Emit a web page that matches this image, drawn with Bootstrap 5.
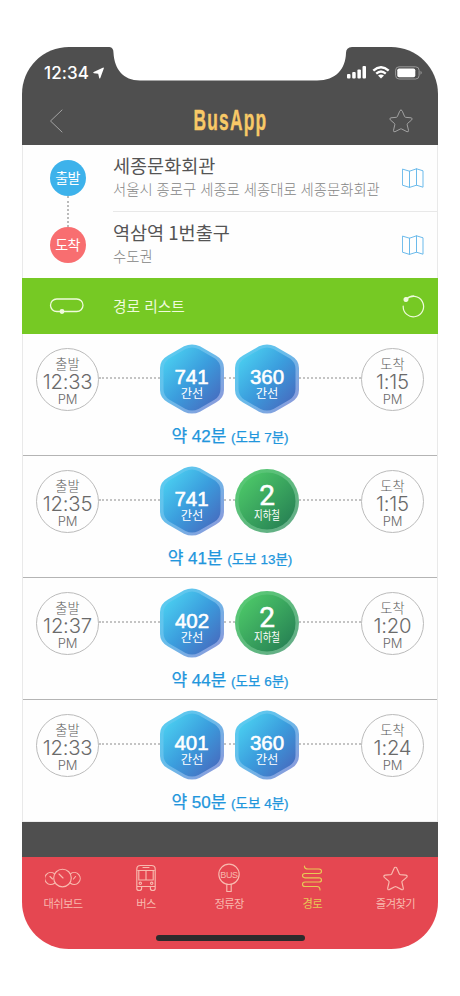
<!DOCTYPE html>
<html lang="ko">
<head>
<meta charset="utf-8">
<meta name="viewport" content="width=device-width, initial-scale=1">
<title>BusApp</title>
<link rel="stylesheet" href="https://cdn.jsdelivr.net/npm/bootstrap@5.3.0/dist/css/bootstrap.min.css">
<style>
body{background:#fff;font-family:"Liberation Sans","Noto Sans CJK KR",sans-serif;color:#595959}
svg{display:block;flex:none}
.phone{width:416px;height:902px;margin:47px 0 0 22px;border-radius:47px;overflow:hidden;background:#fefefe}
.line-icon{fill:none;stroke:currentColor;stroke-linecap:round;stroke-linejoin:round}
.app-head{height:98px;background:#4f4f4f}
.notch{left:0;top:0}
.status{height:51px;padding:0 15px 0 22px}
.clock{font:500 17px/20px Inter,sans-serif;letter-spacing:.1px}
.signals{gap:5px}
.titlebar{height:47px;padding:0 25px 2px 27px;color:#a3a3a3}
.brand{fill:#f8c967;stroke:#f8c967;stroke-width:.4px;stroke-linejoin:round;font:700 28px "Liberation Sans",sans-serif;letter-spacing:2px}
.sides{border:solid #e9e9e9;border-width:0 1px}
.places{height:133px}
.stops{width:89px;padding-top:15px}
.dot{width:36px;height:36px;font:14px/34px "Noto Sans CJK KR",sans-serif;letter-spacing:-.6px;text-align:center}
.dot.from{background:#3db2eb}.dot.to{background:#f86e70}
.stem{height:31px;border-left:2px dotted #bbb}
.place{height:66px;padding-right:13px;margin-left:1px}
.place+.place{border-top:1px solid #e8e8e8;height:67px}
.name{font:18.6px/26px "Noto Sans CJK KR",sans-serif;color:#555;padding-top:7px;word-spacing:-1px;letter-spacing:-.05px}
.addr{font:14.35px/20px "Noto Sans CJK KR",sans-serif;color:#858585;font-weight:300;white-space:nowrap;padding-top:1px}
.map{color:#6bbaeb}
.bar{height:56px;background:#76c924;padding:0 13px 0 27px;color:#effbdc;font:14.7px/54px "Noto Sans CJK KR",sans-serif}
.bar .label{padding-left:29px;padding-bottom:1px}
.route{height:122px;padding:10px 13px 0;border-bottom:1px solid #b4b4b4}
.route:last-of-type{border-bottom-color:#eee}
.when{width:63px;height:63px;border:1px solid #bbb;border-radius:50%;color:#777;text-align:center;padding-top:6px}
.when div{font:300 13.2px/17px "Noto Sans CJK KR",sans-serif;color:#5a5a5a}
.when b{display:block;font:300 20.3px/20px Inter,sans-serif;letter-spacing:-.2px;color:#6a6a6a}
.when small{display:block;font:300 13px/14px Inter,sans-serif;letter-spacing:-.1px;color:#6a6a6a}
.dash{border-top:2px dotted #c4c4c4;height:0;margin-bottom:2px}
.dash.lead-in{width:61px}
.dash.gap{width:11px}
.num{font:20.5px "Liberation Sans",sans-serif;fill:#fff;stroke:#fff;stroke-width:.55px;text-anchor:middle}
.num.big{font:28px Roboto,sans-serif;stroke-width:.5px}
.kind{font:12.3px "Noto Sans CJK KR",sans-serif;fill:#fff;text-anchor:middle}
.total{font:400 17px/24px "Liberation Sans","Noto Sans CJK KR",sans-serif;color:#2196dc;-webkit-text-stroke:.25px #2196dc;padding-top:11px;text-align:center}
.total span{font-size:13.5px}
.spacer{height:35px;background:#4f4f4f}
.tabs{height:92px;background:#e54751;color:#f8b9ae;padding-top:5px}
.tabrow{margin-left:-1px}
.tabrow svg{stroke-width:1.15px}
.tab{width:84px;margin-right:-.9px;font:11.3px/16px "Noto Sans CJK KR",sans-serif;letter-spacing:-.6px}
.tab.on{color:#e7c955}
.home{width:149px;height:6px;border-radius:3px;background:#2d2b2c}
</style>
</head>
<body>
<svg width="0" height="0" class="position-absolute">
<defs>
<linearGradient id="gb" x1="0" y1="0" x2="1" y2="1"><stop offset=".12" stop-color="#49cbef"/><stop offset=".5" stop-color="#3b9ddd"/><stop offset=".95" stop-color="#4768bd"/></linearGradient>
<linearGradient id="ge" x1="0" y1="0" x2="1" y2="1"><stop offset=".1" stop-color="#5accf0"/><stop offset=".5" stop-color="#6bb9e9"/><stop offset=".95" stop-color="#8f97da"/></linearGradient>
<linearGradient id="gg" x1="0" y1="0" x2="1" y2="1"><stop offset=".1" stop-color="#4cc768"/><stop offset=".9" stop-color="#278254"/></linearGradient>
<linearGradient id="gh" x1="0" y1="0" x2="1" y2="1"><stop offset=".1" stop-color="#57c973"/><stop offset=".9" stop-color="#65ad88"/></linearGradient>
<symbol id="hex" viewBox="0 0 64 70"><path fill="url(#ge)" d="M24 2.3Q32-1.500 40 2.3L56 11.5Q64 16 64 24V46Q64 54 56 58.5L40 67.7Q32 71.500 24 67.7L8 58.5Q0 54 0 46V24Q0 16 8 11.5Z"/><path fill="url(#gb)" d="M25.500 5Q32 1.800 38.500 5L54.500 14.200Q60.500 18 60.500 25V45Q60.500 52 54.500 55.800L38.500 65Q32 68.200 25.500 65L9.500 55.800Q3.500 52 3.500 45V25Q3.500 18 9.500 14.200Z"/></symbol>
<symbol id="disc" viewBox="0 0 64 70"><circle cx="32" cy="35" r="32" fill="url(#gh)"/><circle cx="32" cy="35" r="28.500" fill="url(#gg)"/></symbol>
<symbol id="map" viewBox="0 0 22 20"><path d="M.8 1.200 7.500 3.200 14.500.8 21 2.800V19.200L14.500 17.200 7.500 19.400.8 17.300ZM7.500 3.200V19.400M14.500.8V17.200"/></symbol>
<symbol id="star" viewBox="0 0 24 24"><path d="M12 1.200Q13 1.200 13.300 2.200L15.600 7.500Q15.800 8.200 16.600 8.300L22 8.800Q24 9.300 22.700 10.900L18.500 14.500Q18 15 18.200 15.800L19.500 21.300Q19.700 23.200 18 22.700L12.700 20Q12 19.600 11.300 20L6 22.700Q4.300 23.200 4.500 21.300L5.800 15.800Q6 15 5.500 14.500L1.300 10.900Q0 9.300 2 8.800L7.400 8.300Q8.200 8.200 8.400 7.500L10.700 2.200Q11 1.200 12 1.200Z"/></symbol>
</defs>
</svg>

<main class="phone position-relative">
<header class="app-head position-relative">
<svg class="notch position-absolute" width="416" height="36"><path fill="#fff" d="M85 0H87.500Q91.500 .5 91.500 6C92.500 22 101 33.500 118 33.500H295C314 33.500 323.500 22 324 6Q324 .5 330 0Z"/></svg>
<div class="status d-flex align-items-center justify-content-between text-white position-relative">
<div class="d-flex align-items-center"><span class="clock">12:34</span><svg class="ms-1" width="11" height="12" viewBox="0 0 11 12" fill="#fff"><path d="M10.300.6Q11.100.5 10.800 1.400L7.300 11Q6.700 12.100 6.200 11L5.200 6.700.9 6.200Q-.4 5.700.7 5Z"/></svg></div>
<div class="signals d-flex align-items-center">
<svg width="20" height="13" viewBox="0 0 20 13" fill="#fff"><rect x="0" y="8" width="3.500" height="4.500" rx="1"/><rect x="5.200" y="6" width="3.500" height="6.500" rx="1"/><rect x="10.400" y="3.500" width="3.500" height="9" rx="1"/><rect x="15.500" y="0" width="3.500" height="12.500" rx="1"/></svg>
<svg width="18" height="13" viewBox="0 0 18 13" fill="none" stroke="#fff" stroke-width="2.300"><path d="M1.300 4.700Q9-2.300 16.700 4.700M4.200 7.700Q9 3.300 13.800 7.700"/><path fill="#fff" stroke="none" d="M9 12.600 6 9.600Q9 7.200 12 9.600Z"/></svg>
<svg width="28" height="14" viewBox="0 0 28 14"><rect x=".6" y=".8" width="23.500" height="12.200" rx="3.500" fill="none" stroke="#999"/><rect x="2.300" y="2.500" width="18" height="8.800" rx="1.800" fill="#fff"/><path d="M25.500 4.700Q28 6.700 25.500 8.700Z" fill="#999"/></svg>
</div></div>
<div class="titlebar d-flex align-items-center justify-content-between">
<svg class="line-icon" width="14" height="24" viewBox="0 0 14 24"><path d="M13 1 1.500 12 13 23"/></svg>
<svg width="90" height="36" viewBox="0 0 90 36"><text class="brand" x="0" y="0" transform="translate(12.500 26.500) scale(.62 1.060)">BusApp</text></svg>
<svg class="line-icon" width="24" height="24"><use href="#star"/></svg>
</div>
</header>

<section class="places sides d-flex">
<div class="stops d-flex flex-column align-items-center text-white"><div class="dot from rounded-circle">출발</div><div class="stem"></div><div class="dot to rounded-circle">도착</div></div>
<div class="flex-grow-1">
<div class="place d-flex align-items-center justify-content-between"><div class="align-self-start"><div class="name">세종문화회관</div><div class="addr">서울시 종로구 세종로 세종대로 세종문화회관</div></div><svg class="map line-icon" width="22" height="20"><use href="#map"/></svg></div>
<div class="place d-flex align-items-center justify-content-between"><div class="align-self-start"><div class="name">역삼역 1번출구</div><div class="addr">수도권</div></div><svg class="map line-icon" width="22" height="20"><use href="#map"/></svg></div>
</div>
</section>

<section class="bar d-flex align-items-center">
<svg class="line-icon" width="35" height="18" viewBox="0 0 35 18" stroke-width="1.300"><rect x="1.500" y="2" width="32.500" height="12.500" rx="6.250"/><circle cx="13" cy="14.500" r="1.800" fill="currentColor"/></svg>
<span class="label flex-grow-1">경로 리스트</span>
<svg class="line-icon" width="23" height="24" viewBox="0 0 23 24" stroke-width="1.200"><path d="M1.200 12A10.200 10.200 0 1 0 4.200 5.300Q7.200 2 11.700 1.900"/><circle cx="4" cy="5.500" r="1.900" fill="currentColor"/></svg>
</section>

<section class="sides">
<article class="route"><div class="d-flex align-items-center"><div class="when"><div>출발</div><b>12:33</b><small>PM</small></div><i class="dash lead-in"></i><svg width="64" height="70"><use href="#hex"/><text class="num" x="31.500" y="39.500">741</text><text class="kind" x="32" y="53.500">간선</text></svg><i class="dash gap"></i><svg width="64" height="70"><use href="#hex"/><text class="num" x="32" y="39.500">360</text><text class="kind" x="32" y="53.500">간선</text></svg><i class="dash flex-fill"></i><div class="when"><div>도착</div><b>1:15</b><small>PM</small></div></div><div class="total">약 42분 <span>(도보 7분)</span></div></article>
<article class="route"><div class="d-flex align-items-center"><div class="when"><div>출발</div><b>12:35</b><small>PM</small></div><i class="dash lead-in"></i><svg width="64" height="70"><use href="#hex"/><text class="num" x="31.500" y="39.500">741</text><text class="kind" x="32" y="53.500">간선</text></svg><i class="dash gap"></i><svg width="64" height="70"><use href="#disc"/><text class="num big" x="32" y="39">2</text><text class="kind" x="32" y="54" textLength="26" lengthAdjust="spacingAndGlyphs">지하철</text></svg><i class="dash flex-fill"></i><div class="when"><div>도착</div><b>1:15</b><small>PM</small></div></div><div class="total">약 41분 <span>(도보 13분)</span></div></article>
<article class="route"><div class="d-flex align-items-center"><div class="when"><div>출발</div><b>12:37</b><small>PM</small></div><i class="dash lead-in"></i><svg width="64" height="70"><use href="#hex"/><text class="num" x="32" y="39.500">402</text><text class="kind" x="32" y="53.500">간선</text></svg><i class="dash gap"></i><svg width="64" height="70"><use href="#disc"/><text class="num big" x="32" y="39">2</text><text class="kind" x="32" y="54" textLength="26" lengthAdjust="spacingAndGlyphs">지하철</text></svg><i class="dash flex-fill"></i><div class="when"><div>도착</div><b>1:20</b><small>PM</small></div></div><div class="total">약 44분 <span>(도보 6분)</span></div></article>
<article class="route"><div class="d-flex align-items-center"><div class="when"><div>출발</div><b>12:33</b><small>PM</small></div><i class="dash lead-in"></i><svg width="64" height="70"><use href="#hex"/><text class="num" x="31.500" y="39.500">401</text><text class="kind" x="32" y="53.500">간선</text></svg><i class="dash gap"></i><svg width="64" height="70"><use href="#hex"/><text class="num" x="32" y="39.500">360</text><text class="kind" x="32" y="53.500">간선</text></svg><i class="dash flex-fill"></i><div class="when"><div>도착</div><b>1:24</b><small>PM</small></div></div><div class="total">약 50분 <span>(도보 4분)</span></div></article>
</section>
<div class="spacer"></div>
<nav class="tabs">
<div class="tabrow d-flex">
<div class="tab d-flex flex-column align-items-center"><svg class="line-icon" width="36" height="33" viewBox="0 0 36 33"><circle cx="17.500" cy="16" r="8.800"/><path d="M9.200 11.500A6 6 0 1 0 9.500 21.200M25.800 11.500A6 6 0 1 1 25.500 21.200M14 12 18 16M5 14.500 7.500 17M30.500 14.500 28.500 17"/></svg>대쉬보드</div>
<div class="tab d-flex flex-column align-items-center"><svg class="line-icon" width="20" height="33" viewBox="0 0 20 33"><path d="M.8 24.500V7Q.8 3.500 4.500 3.500H15.500Q19.200 3.500 19.200 7V24.500M2 8.500H18M10 8.500V18M2.800 8.500V18H17.200V8.500M1 24.500H19M7 5.500H13M.8 24.500V26.500Q.8 28.500 3.200 28.500 5.600 28.500 5.600 26.500V24.500M14.400 24.500V26.500Q14.400 28.500 16.800 28.500 19.200 28.500 19.200 26.500V24.500"/><circle cx="4.300" cy="21.300" r="1.200"/><circle cx="15.700" cy="21.300" r="1.200"/></svg>버스</div>
<div class="tab d-flex flex-column align-items-center"><svg class="line-icon" width="24" height="33" viewBox="0 0 24 33"><circle cx="12" cy="12.300" r="10.200"/><path d="M9.800 22.500V29.500H14.200V22.500"/><text x="12" y="15.600" text-anchor="middle" font-family="Liberation Sans" font-size="9" letter-spacing="-.3" fill="currentColor" stroke="none">BUS</text></svg>정류장</div>
<div class="tab on d-flex flex-column align-items-center"><svg class="line-icon" width="22" height="33" viewBox="0 0 22 33"><path d="M3.500 4V5Q4 7 7 7H18Q20.500 7.200 20.500 9.300 20.500 11.500 18 11.500H4Q1.500 11.700 1.500 13.600 1.500 15.800 4 15.800H18Q20.500 16 20.500 18 20.500 20 18 20H4Q1.500 20.200 1.500 22.200 1.500 24.500 4 24.500H16Q19 24.500 19 28"/></svg>경로</div>
<div class="tab d-flex flex-column align-items-center"><svg class="line-icon my-1" width="25" height="25"><use href="#star"/></svg>즐겨찾기</div>
</div>
<div class="home mx-auto mt-4"></div>
</nav>
</main>
<script src="https://cdn.jsdelivr.net/npm/bootstrap@5.3.0/dist/js/bootstrap.bundle.min.js"></script>
</body>
</html>
